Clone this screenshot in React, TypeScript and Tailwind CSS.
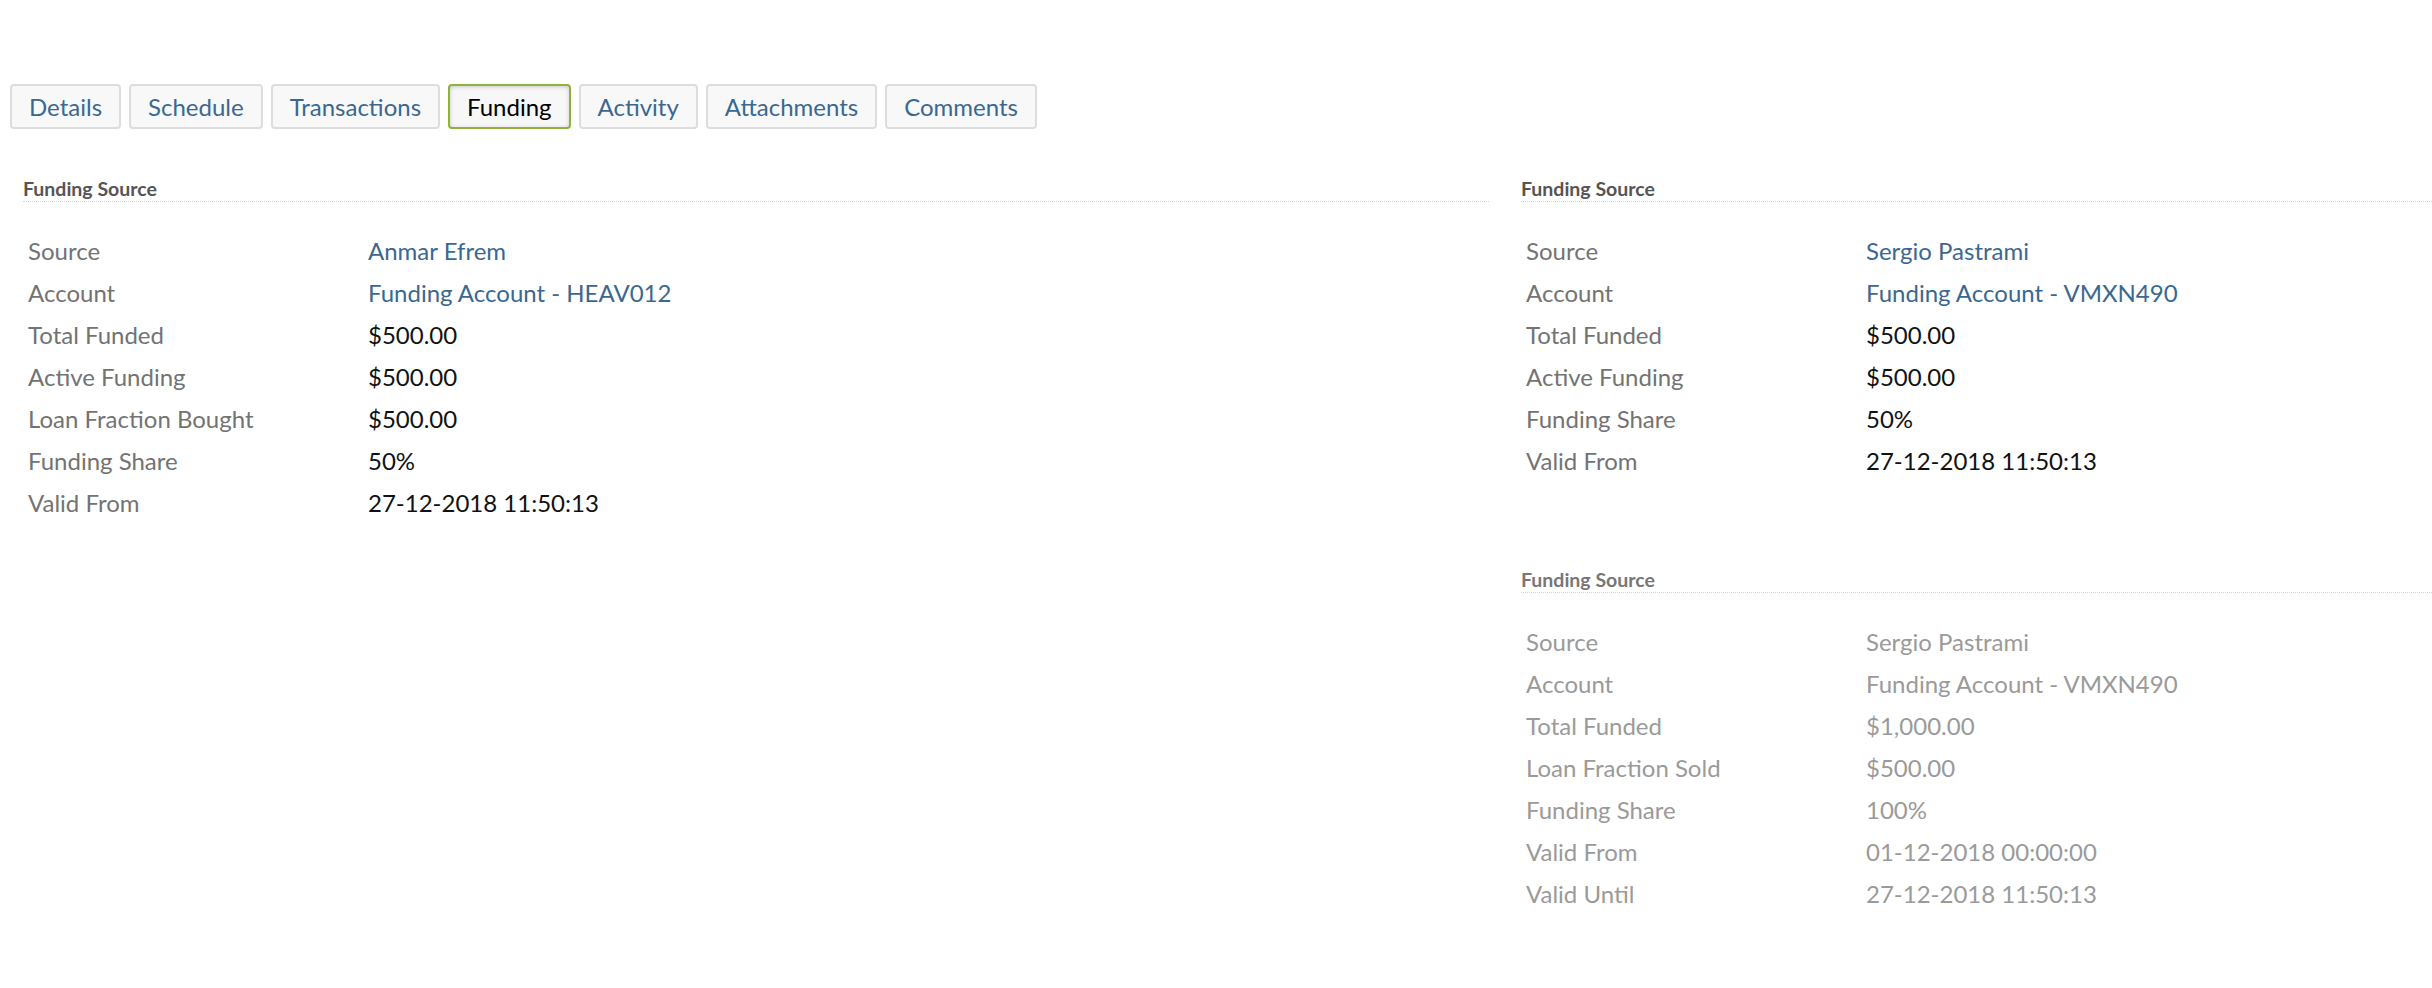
import React from 'react'

type Row = { label: string; value: string; link?: boolean }

const TABS = ['Details', 'Schedule', 'Transactions', 'Funding', 'Activity', 'Attachments', 'Comments']

const LEFT_ROWS: Row[] = [
  { label: 'Source', value: 'Anmar Efrem', link: true },
  { label: 'Account', value: 'Funding Account - HEAV012', link: true },
  { label: 'Total Funded', value: '$500.00' },
  { label: 'Active Funding', value: '$500.00' },
  { label: 'Loan Fraction Bought', value: '$500.00' },
  { label: 'Funding Share', value: '50%' },
  { label: 'Valid From', value: '27-12-2018 11:50:13' },
]

const RIGHT_ROWS: Row[] = [
  { label: 'Source', value: 'Sergio Pastrami', link: true },
  { label: 'Account', value: 'Funding Account - VMXN490', link: true },
  { label: 'Total Funded', value: '$500.00' },
  { label: 'Active Funding', value: '$500.00' },
  { label: 'Funding Share', value: '50%' },
  { label: 'Valid From', value: '27-12-2018 11:50:13' },
]

const HISTORY_ROWS: Row[] = [
  { label: 'Source', value: 'Sergio Pastrami' },
  { label: 'Account', value: 'Funding Account - VMXN490' },
  { label: 'Total Funded', value: '$1,000.00' },
  { label: 'Loan Fraction Sold', value: '$500.00' },
  { label: 'Funding Share', value: '100%' },
  { label: 'Valid From', value: '01-12-2018 00:00:00' },
  { label: 'Valid Until', value: '27-12-2018 11:50:13' },
]

function FundingPanel({ rows, inactive = false }: { rows: Row[]; inactive?: boolean }) {
  return (
    <div>
      <h3
        className={`border-b border-dotted border-[#d6d6d6] pt-[2px] pb-[1px] text-[19.5px] font-bold leading-[22px] ${
          inactive ? 'text-[#777777]' : 'text-[#555555]'
        }`}
      >
        Funding Source
      </h3>
      <div className="mt-[28px] pl-[5px]">
        {rows.map((row) => (
          <div key={row.label} className="flex text-[24px] leading-[42px]">
            <div className={`w-[340px] flex-shrink-0 ${inactive ? 'text-[#9a9a9a]' : 'text-[#737373]'}`}>{row.label}</div>
            <div
              className={
                inactive ? 'text-[#9a9a9a]' : row.link ? 'cursor-pointer text-[#3b6890]' : 'text-[#111111]'
              }
            >
              {row.value}
            </div>
          </div>
        ))}
      </div>
    </div>
  )
}

export default function App() {
  return (
    <div className="min-h-[988px] bg-white pt-[84px] font-['Lato','Liberation_Sans',sans-serif]">
      <div className="flex gap-[8px] pl-[10px]">
        {TABS.map((tab) => {
          const active = tab === 'Funding'
          return (
            <button
              key={tab}
              className={`h-[45px] rounded-[4px] border-2 px-[17px] text-[24px] leading-none ${
                active
                  ? 'border-[#8db33c] bg-[#f7f7f7] text-black shadow-[inset_0_1px_4px_rgba(0,0,0,0.18)]'
                  : 'border-[#dddddd] bg-[#f8f8f8] text-[#3b6890]'
              }`}
            >
              {tab}
            </button>
          )
        })}
      </div>

      <div className="mt-[47px] flex gap-[32px] pl-[23px]">
        <div className="w-[1466px] flex-shrink-0">
          <FundingPanel rows={LEFT_ROWS} />
        </div>
        <div className="flex flex-1 flex-col gap-[85px]">
          <FundingPanel rows={RIGHT_ROWS} />
          <FundingPanel rows={HISTORY_ROWS} inactive />
        </div>
      </div>
    </div>
  )
}
